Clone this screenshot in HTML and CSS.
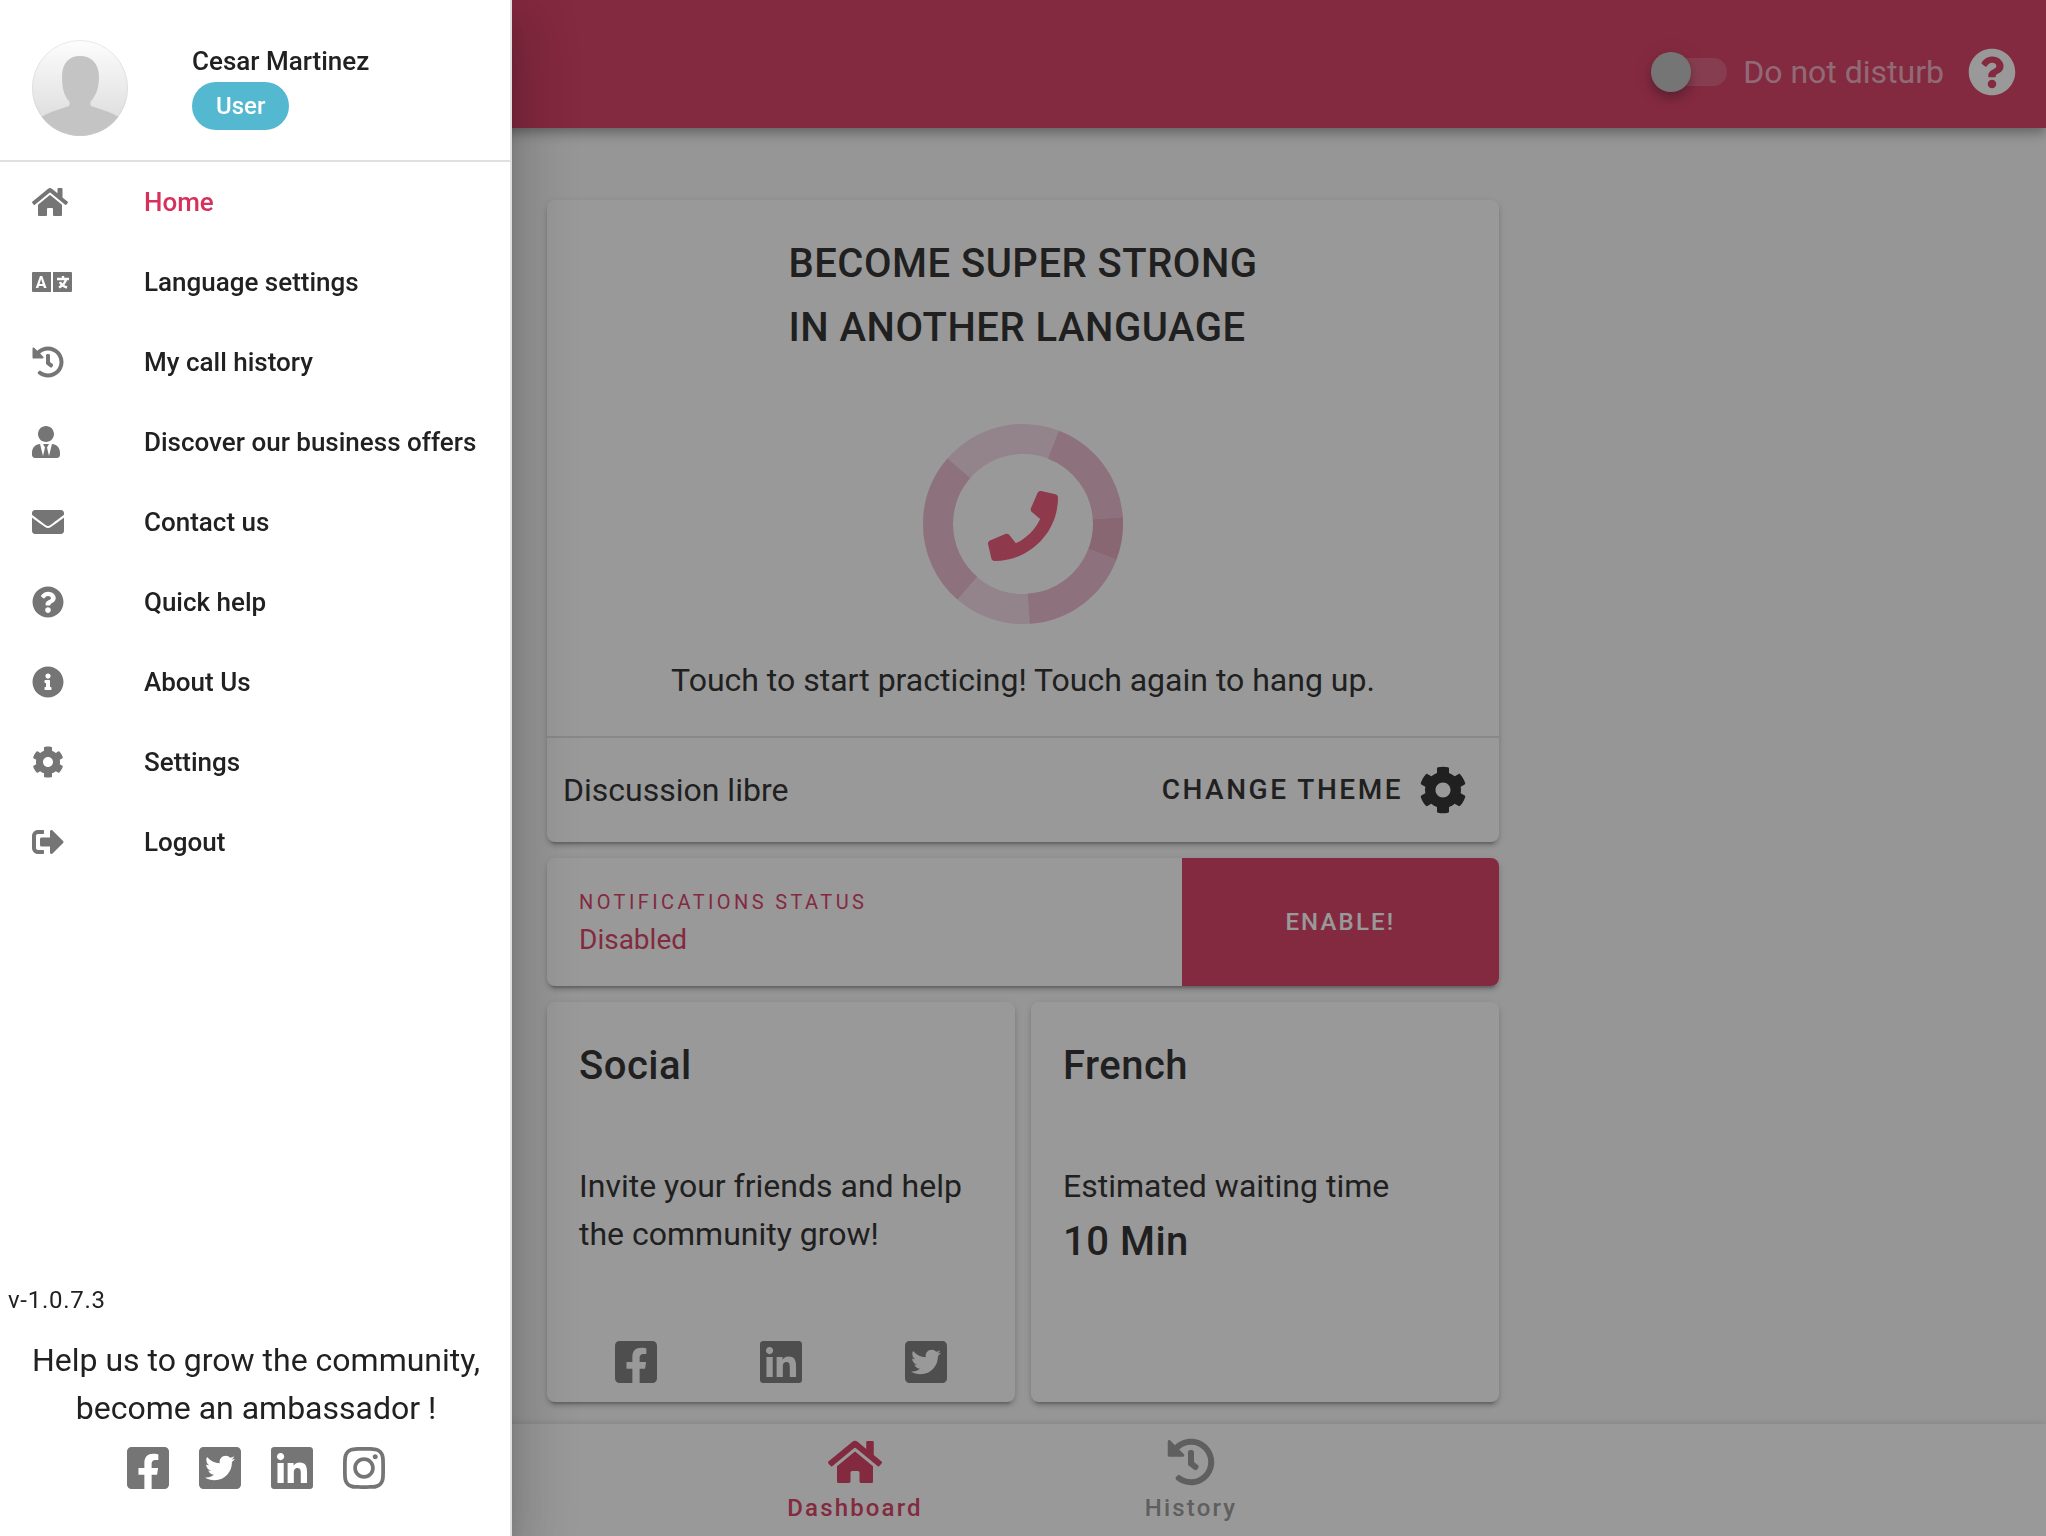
FILE: index.html
```html
<!DOCTYPE html>
<html lang="en">
<head>
<meta charset="UTF-8">
<meta name="viewport" content="width=device-width, initial-scale=1.0">
<title>Dashboard</title>
<link rel="stylesheet" href="styles.css">
</head>
<body>

<!-- Shared icons -->
<svg class="sprite" aria-hidden="true">
  <defs>
    <path id="i-home" d="M280.37 148.26L96 300.11V464a16 16 0 0 0 16 16l112.06-.29a16 16 0 0 0 15.92-16V368a16 16 0 0 1 16-16h64a16 16 0 0 1 16 16v95.64a16 16 0 0 0 16 16.05L464 480a16 16 0 0 0 16-16V300L295.67 148.26a12.19 12.19 0 0 0-15.3 0zM571.6 251.47L488 182.56V44.05a12 12 0 0 0-12-12h-56a12 12 0 0 0-12 12v72.61L318.47 43a48 48 0 0 0-61 0L4.34 251.47a12 12 0 0 0-1.6 16.9l25.5 31A12 12 0 0 0 45.15 301l235.22-193.74a12.19 12.19 0 0 1 15.3 0L530.9 301a12 12 0 0 0 16.9-1.6l25.5-31a12 12 0 0 0-1.7-16.93z"/>
    <path id="i-history" d="M504 255.531c.253 136.64-111.18 248.372-247.82 248.468-59.015.042-113.223-20.53-155.822-54.911-11.077-8.94-11.905-25.541-1.839-35.607l11.267-11.267c8.609-8.609 22.353-9.551 31.891-1.984C173.062 425.135 212.781 440 256 440c101.705 0 184-82.311 184-184 0-101.705-82.311-184-184-184-48.814 0-93.149 18.969-126.068 49.932l50.754 50.754c10.08 10.08 2.941 27.314-11.313 27.314H24c-8.837 0-16-7.163-16-16V38.627c0-14.254 17.234-21.393 27.314-11.314l49.372 49.372C129.209 34.136 189.552 8 256 8c136.81 0 247.747 110.78 248 247.531zm-180.912 78.784l9.823-12.63c8.138-10.463 6.253-25.542-4.21-33.679L288 256.349V152c0-13.255-10.745-24-24-24h-16c-13.255 0-24 10.745-24 24v135.651l65.409 50.874c10.463 8.137 25.541 6.253 33.679-4.21z"/>
    <path id="i-help" d="M504 256c0 136.997-111.043 248-248 248S8 392.997 8 256C8 119.083 119.043 8 256 8s248 111.083 248 248zM262.655 90c-54.497 0-89.255 22.957-116.549 63.758-3.536 5.286-2.353 12.415 2.715 16.258l34.699 26.31c5.205 3.947 12.621 3.008 16.665-2.122 17.864-22.658 30.113-35.797 57.303-35.797 20.429 0 45.698 13.148 45.698 32.958 0 14.976-12.363 22.667-32.534 33.976C247.128 238.528 216 254.941 216 296v4c0 6.627 5.373 12 12 12h56c6.627 0 12-5.373 12-12v-1.333c0-28.462 83.186-29.647 83.186-106.667 0-58.002-60.165-102-116.531-102zM256 338c-25.365 0-46 20.635-46 46 0 25.364 20.635 46 46 46s46-20.636 46-46c0-25.365-20.635-46-46-46z"/>
    <path id="i-cog" d="M487.4 315.7l-42.6-24.6c4.3-23.2 4.3-47 0-70.2l42.6-24.6c4.9-2.8 7.1-8.6 5.5-14-11.1-35.6-30-67.8-54.7-94.6-3.8-4.1-10-5.1-14.8-2.3L380.8 110c-17.9-15.4-38.5-27.3-60.8-35.1V25.8c0-5.6-3.9-10.5-9.4-11.7-36.7-8.2-74.3-7.8-109.2 0-5.5 1.2-9.4 6.1-9.4 11.7V75c-22.2 7.9-42.8 19.8-60.8 35.1L88.7 85.5c-4.9-2.8-11-1.9-14.8 2.3-24.7 26.7-43.6 58.9-54.7 94.6-1.7 5.4.6 11.2 5.5 14L67.3 221c-4.3 23.2-4.3 47 0 70.2l-42.6 24.6c-4.9 2.8-7.1 8.6-5.5 14 11.1 35.6 30 67.8 54.7 94.6 3.8 4.1 10 5.1 14.8 2.3l42.6-24.6c17.9 15.4 38.5 27.3 60.8 35.1v49.2c0 5.6 3.9 10.5 9.4 11.7 36.7 8.2 74.3 7.8 109.2 0 5.5-1.2 9.4-6.1 9.4-11.7v-49.2c22.2-7.9 42.8-19.8 60.8-35.1l42.6 24.6c4.9 2.8 11 1.9 14.8-2.3 24.7-26.7 43.6-58.9 54.7-94.6 1.5-5.5-.7-11.3-5.6-14.1zM256 336c-44.1 0-80-35.9-80-80s35.9-80 80-80 80 35.9 80 80-35.9 80-80 80z"/>
    <path id="i-facebook" d="M400 32H48A48 48 0 0 0 0 80v352a48 48 0 0 0 48 48h137.25V327.69h-63V256h63v-54.64c0-62.15 37-96.48 93.67-96.48 27.14 0 55.52 4.84 55.52 4.84v61h-31.27c-30.81 0-40.42 19.12-40.42 38.73V256h68.78l-11 71.69h-57.78V480H400a48 48 0 0 0 48-48V80a48 48 0 0 0-48-48z"/>
    <path id="i-twitter" d="M400 32H48C21.5 32 0 53.5 0 80v352c0 26.5 21.5 48 48 48h352c26.5 0 48-21.5 48-48V80c0-26.5-21.5-48-48-48zm-48.9 158.8c.2 2.8.2 5.7.2 8.5 0 86.7-66 186.6-186.6 186.6-37.2 0-71.7-10.8-100.7-29.4 5.3.6 10.4.8 15.8.8 30.7 0 58.9-10.4 81.4-28-28.8-.6-53-19.5-61.3-45.5 10.1 1.5 19.2 1.5 29.6-1.2-30-6.1-52.5-32.5-52.5-64.4v-.8c8.7 4.9 18.9 7.9 29.6 8.3a65.447 65.447 0 0 1-29.2-54.6c0-12.2 3.2-23.4 8.9-33.1 32.3 39.8 80.8 65.8 135.2 68.6-9.3-44.5 24-80.6 64-80.6 18.9 0 35.9 7.9 47.9 20.7 14.8-2.8 29-8.3 41.6-15.8-4.9 15.2-15.2 28-28.8 36.1 13.2-1.4 26-5.1 37.8-10.2-8.9 13.1-20.1 24.7-32.9 34z"/>
    <path id="i-linkedin" d="M416 32H31.9C14.3 32 0 46.5 0 64.3v383.4C0 465.5 14.3 480 31.9 480H416c17.6 0 32-14.5 32-32.3V64.3c0-17.8-14.4-32.3-32-32.3zM135.4 416H69V202.2h66.5V416zm-33.2-243c-21.3 0-38.5-17.3-38.5-38.5S80.9 96 102.2 96c21.2 0 38.5 17.3 38.5 38.5 0 21.3-17.2 38.5-38.5 38.5zm282.1 243h-66.4V312c0-24.8-.5-56.7-34.5-56.7-34.6 0-39.9 27-39.9 54.9V416h-66.4V202.2h63.7v29.2h.9c8.9-16.8 30.6-34.5 62.9-34.5 67.2 0 79.7 44.3 79.7 101.9V416z"/>
    <path id="i-instagram" d="M224.1 141c-63.6 0-114.9 51.3-114.9 114.9s51.3 114.9 114.9 114.9S339 319.5 339 255.9 287.7 141 224.1 141zm0 189.6c-41.1 0-74.7-33.5-74.7-74.7s33.5-74.7 74.7-74.7 74.7 33.5 74.7 74.7-33.6 74.7-74.7 74.7zm146.4-194.3c0 14.9-12 26.8-26.8 26.8-14.9 0-26.8-12-26.8-26.8s12-26.8 26.8-26.8 26.8 12 26.8 26.8zm76.1 27.2c-1.7-35.9-9.9-67.7-36.2-93.9-26.2-26.2-58-34.4-93.9-36.2-37-2.1-147.9-2.1-184.9 0-35.8 1.7-67.6 9.9-93.9 36.1s-34.4 58-36.2 93.9c-2.1 37-2.1 147.9 0 184.9 1.7 35.9 9.9 67.7 36.2 93.9s58 34.4 93.9 36.2c37 2.1 147.9 2.1 184.9 0 35.9-1.7 67.7-9.9 93.9-36.2 26.2-26.2 34.4-58 36.2-93.9 2.1-37 2.1-147.8 0-184.8zM398.8 388c-7.8 19.6-22.9 34.7-42.6 42.6-29.5 11.7-99.5 9-132.1 9s-102.7 2.6-132.1-9c-19.6-7.8-34.7-22.9-42.6-42.6-11.7-29.5-9-99.5-9-132.1s-2.6-102.7 9-132.1c7.8-19.6 22.9-34.7 42.6-42.6 29.5-11.7 99.5-9 132.1-9s102.7-2.6 132.1 9c19.6 7.8 34.7 22.9 42.6 42.6 11.7 29.5 9 99.5 9 132.1s2.7 102.7-9 132.1z"/>
  </defs>
</svg>

<header class="topbar">
  <label class="dnd">
    <input type="checkbox" class="switch" id="dnd">
    <span>Do not disturb</span>
  </label>
  <button class="iconBtn" aria-label="Help">
    <svg class="icon large" viewBox="0 0 512 512"><use href="#i-help"/></svg>
  </button>
</header>

<main class="content">
  <section class="card practice">
    <h1>BECOME SUPER STRONG<br>IN ANOTHER LANGUAGE</h1>
    <button class="callBtn" aria-label="Start practicing">
      <svg class="ring" viewBox="0 0 200 200">
        <!-- one circle per arc: dash length, then start angle -->
        <g fill="none" stroke-width="30" transform="rotate(-90 100 100)">
          <circle cx="100" cy="100" r="85" pathLength="360" stroke="#f4d6e3"/>
          <circle cx="100" cy="100" r="85" pathLength="360" stroke="#e9b7cb" stroke-dasharray="65 295" stroke-dashoffset="-21"/>
          <circle cx="100" cy="100" r="85" pathLength="360" stroke="#e0a1b7" stroke-dasharray="25 335" stroke-dashoffset="-86"/>
          <circle cx="100" cy="100" r="85" pathLength="360" stroke="#e9b7cb" stroke-dasharray="65 295" stroke-dashoffset="-111"/>
          <circle cx="100" cy="100" r="85" pathLength="360" stroke="#e9b7cb" stroke-dasharray="90 270" stroke-dashoffset="-221"/>
        </g>
        <svg x="65" y="67" width="70" height="70" viewBox="0 0 512 512">
          <path fill="#ed4e71" d="M493.4 24.6l-104-24c-11.3-2.6-22.9 3.3-27.5 13.9l-48 112c-4.2 9.8-1.4 21.3 6.9 28l60.6 49.6c-36 76.7-98.9 140.5-177.2 177.2l-49.6-60.6c-6.8-8.3-18.2-11.1-28-6.9l-112 48C3.9 366.5-2 378.1.6 389.4l24 104C27.1 504.2 36.7 512 48 512c256.1 0 464-207.5 464-464 0-11.2-7.7-20.9-18.6-23.4z"/>
        </svg>
      </svg>
    </button>
    <p>Touch to start practicing! Touch again to hang up.</p>
    <div class="theme">
      <span>Discussion libre</span>
      <button class="themeBtn">
        CHANGE THEME
        <svg class="icon large" viewBox="0 0 512 512"><use href="#i-cog"/></svg>
      </button>
    </div>
  </section>

  <section class="card notifications">
    <div class="status">
      <div class="overline">NOTIFICATIONS STATUS</div>
      <div>Disabled</div>
    </div>
    <button class="enableBtn">ENABLE!</button>
  </section>

  <div class="tiles">
    <section class="card tile">
      <h2>Social</h2>
      <p>Invite your friends and help the community grow!</p>
      <div class="share">
        <a href="#" aria-label="Facebook"><svg class="icon large" viewBox="0 0 448 512"><use href="#i-facebook"/></svg></a>
        <a href="#" aria-label="LinkedIn"><svg class="icon large" viewBox="0 0 448 512"><use href="#i-linkedin"/></svg></a>
        <a href="#" aria-label="Twitter"><svg class="icon large" viewBox="0 0 448 512"><use href="#i-twitter"/></svg></a>
      </div>
    </section>
    <section class="card tile">
      <h2>French</h2>
      <p>Estimated waiting time</p>
      <p class="wait">10 Min</p>
    </section>
  </div>
</main>

<nav class="bottomNav">
  <a href="#" class="active">
    <svg class="icon large" viewBox="0 0 576 512"><use href="#i-home"/></svg>
    <span>Dashboard</span>
  </a>
  <a href="#">
    <svg class="icon large" viewBox="0 0 512 512"><use href="#i-history"/></svg>
    <span>History</span>
  </a>
</nav>

<div class="overlay"></div>

<aside class="drawer">
  <div class="profile">
    <svg class="avatar" viewBox="0 0 96 96" role="img" aria-label="Avatar">
      <defs>
        <linearGradient id="avatarBg" x1="0" y1="0" x2="0" y2="1">
          <stop offset="0" stop-color="#fdfdfd"/>
          <stop offset="1" stop-color="#d8d8d8"/>
        </linearGradient>
        <clipPath id="avatarClip"><circle cx="48" cy="48" r="48"/></clipPath>
      </defs>
      <g clip-path="url(#avatarClip)">
        <rect width="96" height="96" fill="url(#avatarBg)"/>
        <path fill="#c4c4c4" d="M48 16c11 0 19 7 19 21 0 11-3 18-7 23-2 2-2 3-1 6 8 3 18 5 28 11v19H9V77c10-6 20-8 28-11 1-3 1-4-1-6-4-5-6-12-6-23 0-14 7-21 18-21z"/>
      </g>
      <circle cx="48" cy="48" r="47.5" fill="none" stroke="#ccc" stroke-opacity=".4"/>
    </svg>
    <div>
      <div class="name">Cesar Martinez</div>
      <span class="chip">User</span>
    </div>
  </div>

  <nav class="menu">
    <a href="#" class="active">
      <span class="menuIcon"><svg class="icon" viewBox="0 0 576 512"><use href="#i-home"/></svg></span>
      Home
    </a>
    <a href="#">
      <span class="menuIcon">
        <svg class="icon" viewBox="0 0 40 32">
          <path d="M1 6h18v20H1a1 1 0 0 1-1-1V7a1 1 0 0 1 1-1zM21 6h18a1 1 0 0 1 1 1v18a1 1 0 0 1-1 1H21z"/>
          <text class="langLetter" x="9" y="22" aria-hidden="true">A</text>
          <g fill="none" stroke="#fff" stroke-width="2.4">
            <path d="M31 10v3M25 13h12M34 13.500c-1 4-3 6-7 8M28 16c1 2.500 4 4.500 7 5.500"/>
          </g>
        </svg>
      </span>
      Language settings
    </a>
    <a href="#">
      <span class="menuIcon"><svg class="icon" viewBox="0 0 512 512"><use href="#i-history"/></svg></span>
      My call history
    </a>
    <a href="#">
      <span class="menuIcon"><svg class="icon" viewBox="0 0 448 512"><path d="M224 256c70.7 0 128-57.3 128-128S294.7 0 224 0 96 57.3 96 128s57.3 128 128 128zm95.8 32.6L272 480l-32-136 32-56h-96l32 56-32 136-47.8-191.4C56.9 292 0 350.3 0 422.4V464c0 26.5 21.5 48 48 48h352c26.5 0 48-21.5 48-48v-41.6c0-72.1-56.9-130.4-128.2-133.8z"/></svg></span>
      Discover our business offers
    </a>
    <a href="#">
      <span class="menuIcon"><svg class="icon" viewBox="0 0 512 512"><path d="M502.3 190.8c3.9-3.1 9.7-.2 9.7 4.7V400c0 26.5-21.5 48-48 48H48c-26.5 0-48-21.5-48-48V195.6c0-5 5.7-7.8 9.7-4.7 22.4 17.4 52.1 39.5 154.1 113.6 21.1 15.4 56.7 47.8 92.2 47.6 35.7.3 72-32.8 92.3-47.6 102-74.1 131.6-96.3 154-113.7zM256 320c23.2.4 56.6-29.2 73.4-41.4 132.7-96.3 142.8-104.7 173.4-128.7 5.8-4.5 9.2-11.5 9.2-18.9v-19c0-26.5-21.5-48-48-48H48c-26.5 0-48 21.5-48 48v19c0 7.4 3.4 14.3 9.2 18.9 30.6 23.9 40.7 32.4 173.4 128.7 16.8 12.2 50.2 41.8 73.4 41.4z"/></svg></span>
      Contact us
    </a>
    <a href="#">
      <span class="menuIcon"><svg class="icon" viewBox="0 0 512 512"><use href="#i-help"/></svg></span>
      Quick help
    </a>
    <a href="#">
      <span class="menuIcon"><svg class="icon" viewBox="0 0 512 512"><path d="M256 8C119.043 8 8 119.083 8 256c0 136.997 111.043 248 248 248s248-111.003 248-248C504 119.083 392.957 8 256 8zm0 110c23.196 0 42 18.804 42 42s-18.804 42-42 42-42-18.804-42-42 18.804-42 42-42zm56 254c0 6.627-5.373 12-12 12h-88c-6.627 0-12-5.373-12-12v-24c0-6.627 5.373-12 12-12h12v-64h-12c-6.627 0-12-5.373-12-12v-24c0-6.627 5.373-12 12-12h64c6.627 0 12 5.373 12 12v100h12c6.627 0 12 5.373 12 12v24z"/></svg></span>
      About Us
    </a>
    <a href="#">
      <span class="menuIcon"><svg class="icon" viewBox="0 0 512 512"><use href="#i-cog"/></svg></span>
      Settings
    </a>
    <a href="#">
      <span class="menuIcon"><svg class="icon" viewBox="0 0 512 512"><path d="M497 273L329 441c-15 15-41 4.500-41-17v-96H152c-13.300 0-24-10.700-24-24v-96c0-13.300 10.700-24 24-24h136V88c0-21.400 25.900-32 41-17l168 168c9.300 9.400 9.300 24.600 0 34zM192 436v-40c0-6.600-5.400-12-12-12H96c-17.700 0-32-14.300-32-32V160c0-17.700 14.300-32 32-32h84c6.600 0 12-5.400 12-12V76c0-6.600-5.400-12-12-12H96c-53 0-96 43-96 96v192c0 53 43 96 96 96h84c6.600 0 12-5.400 12-12z"/></svg></span>
      Logout
    </a>
  </nav>

  <footer class="drawerFooter">
    <div class="version">v-1.0.7.3</div>
    <p>Help us to grow the community, become an ambassador !</p>
    <div class="follow">
      <a href="#" aria-label="Facebook"><svg class="icon large" viewBox="0 0 448 512"><use href="#i-facebook"/></svg></a>
      <a href="#" aria-label="Twitter"><svg class="icon large" viewBox="0 0 448 512"><use href="#i-twitter"/></svg></a>
      <a href="#" aria-label="LinkedIn"><svg class="icon large" viewBox="0 0 448 512"><use href="#i-linkedin"/></svg></a>
      <a href="#" aria-label="Instagram"><svg class="icon large" viewBox="0 0 448 512"><use href="#i-instagram"/></svg></a>
    </div>
  </footer>
</aside>

</body>
</html>
```
FILE: styles.css
```css
:root {
  --primary: #d7315b;
  --text: #212121;
  --muted: #757575;
  --line: #e0e0e0;
}
* {
  box-sizing: border-box;
}
body {
  display: flex;
  flex-direction: column;
  min-height: 100vh;
  margin: 0;
  background-color: #fafafa;
  color: var(--text);
  font-family: Roboto, "Liberation Sans", sans-serif;
  font-size: 32px;
  line-height: 48px;
}
h1, h2, p {
  margin: 0;
}
h1, h2, .wait {
  font-size: 40px;
  font-weight: 500;
  line-height: 64px;
  letter-spacing: .0125em;
}
a {
  color: inherit;
  text-decoration: none;
}
button {
  padding: 0;
  border: none;
  background: none;
  color: inherit;
  font: inherit;
  cursor: pointer;
}
.sprite {
  position: absolute;
  width: 0;
  height: 0;
}
.icon {
  display: block;
  flex: none;
  height: 32px;
  fill: currentColor;
}
.icon.large {
  height: 48px;
}

/* Top bar */
.topbar {
  position: relative;
  display: flex;
  align-items: center;
  justify-content: flex-end;
  gap: 24px;
  height: 128px;
  padding: 16px 30px 0 32px;
  background-color: var(--primary);
  color: #fff;
  box-shadow: 0 4px 8px -2px rgba(0, 0, 0, .2), 0 8px 10px rgba(0, 0, 0, .14), 0 2px 20px rgba(0, 0, 0, .12);
}
.dnd {
  display: flex;
  align-items: center;
  gap: 16px;
  color: rgba(255, 255, 255, .6);
}
.switch {
  position: relative;
  width: 72px;
  height: 28px;
  margin: 0;
  border-radius: 14px;
  background-color: rgba(255, 255, 255, .18);
  appearance: none;
}
.switch::before {
  content: "";
  position: absolute;
  top: -6px;
  left: -4px;
  width: 40px;
  height: 40px;
  border-radius: 50%;
  background-color: #bdbdbd;
  box-shadow: 0 4px 8px -2px rgba(0, 0, 0, .2), 0 8px 10px rgba(0, 0, 0, .14), 0 2px 20px rgba(0, 0, 0, .12);
}
.switch:checked::before {
  left: 36px;
}

/* Cards */
.content {
  display: flex;
  flex: 1;
  flex-direction: column;
  gap: 16px;
  width: 100%;
  max-width: 952px;
  margin: 0 auto;
  padding: 72px 0 22px;
}
.card {
  border-radius: 8px;
  background-color: #fff;
  box-shadow: 0 6px 2px -4px rgba(0, 0, 0, .2), 0 4px 4px rgba(0, 0, 0, .14), 0 2px 10px rgba(0, 0, 0, .12);
}
.practice {
  display: flex;
  flex-direction: column;
  align-items: center;
  padding-top: 32px;
}
.callBtn {
  margin: 64px 0 32px;
}
.ring {
  display: block;
  width: 200px;
  height: 200px;
}
.theme {
  display: flex;
  align-items: center;
  justify-content: space-between;
  width: 100%;
  margin-top: 32px;
  padding: 28px 32px 28px 16px;
  border-top: 2px solid var(--line);
}
.themeBtn {
  display: flex;
  align-items: center;
  gap: 16px;
  font-size: 28px;
  font-weight: 500;
  letter-spacing: .09em;
}
.notifications {
  display: grid;
  grid-template-columns: 2fr 1fr;
  overflow: hidden;
  color: var(--primary);
}
.status {
  padding: 26px 32px;
  font-size: 28px;
  line-height: 40px;
}
.overline {
  font-size: 20px;
  line-height: 36px;
  letter-spacing: .17em;
}
.enableBtn {
  background-color: var(--primary);
  color: #fff;
  font-size: 24px;
  font-weight: 500;
  letter-spacing: .09em;
}
.tiles {
  display: grid;
  grid-template-columns: 1fr 1fr;
  gap: 16px;
}
.tile {
  display: flex;
  flex-direction: column;
  min-height: 400px;
  padding: 32px 32px 16px;
}
.tile h2 {
  margin-bottom: 64px;
}
.share {
  display: flex;
  justify-content: space-around;
  margin: auto -16px 0;
  color: var(--muted);
}

/* Bottom navigation */
.bottomNav {
  display: flex;
  justify-content: center;
  background-color: #fff;
  color: #949494;
  font-size: 24px;
  font-weight: 500;
  line-height: 32px;
  letter-spacing: .09em;
  box-shadow: 0 0 8px rgba(0, 0, 0, .16);
}
.bottomNav a {
  display: flex;
  flex-direction: column;
  align-items: center;
  gap: 6px;
  width: 336px;
  padding: 14px 0 12px;
}
.bottomNav .active {
  color: var(--primary);
}

.overlay {
  position: fixed;
  inset: 0;
  background-color: rgba(33, 33, 33, .46);
}

/* Drawer */
.drawer {
  position: fixed;
  top: 0;
  bottom: 0;
  left: 0;
  display: flex;
  flex-direction: column;
  width: 512px;
  overflow-y: auto;
  background-color: #fff;
  box-shadow: inset -2px 0 var(--line), 0 16px 20px -10px rgba(0, 0, 0, .2), 0 32px 48px 4px rgba(0, 0, 0, .14), 0 12px 60px 10px rgba(0, 0, 0, .12);
}
.profile {
  display: flex;
  align-items: flex-start;
  gap: 64px;
  padding: 40px 32px 24px;
  border-bottom: 2px solid var(--line);
}
.avatar {
  width: 96px;
  height: 96px;
}
.name {
  font-size: 26px;
  font-weight: 500;
  line-height: 42px;
}
.chip {
  display: block;
  width: fit-content;
  padding: 0 24px;
  border-radius: 24px;
  background-color: #54b8d1;
  color: #fff;
  font-size: 24px;
  font-weight: 500;
}
.menu a {
  display: flex;
  align-items: center;
  height: 80px;
  padding: 0 32px;
  font-size: 26px;
  font-weight: 500;
  white-space: nowrap;
}
.menu .active {
  color: var(--primary);
}
.menuIcon {
  flex: none;
  width: 112px;
  color: var(--muted);
}
.langLetter {
  fill: #fff;
  font-size: 16px;
  font-weight: 700;
  text-anchor: middle;
}
.drawerFooter {
  margin-top: auto;
  padding-bottom: 44px;
  text-align: center;
}
.drawerFooter p {
  padding: 0 24px;
}
.version {
  padding: 0 8px 16px;
  font-size: 24px;
  line-height: 40px;
  letter-spacing: .03em;
  text-align: left;
}
.follow {
  display: flex;
  justify-content: center;
  gap: 30px;
  margin-top: 12px;
  color: var(--muted);
}
```
